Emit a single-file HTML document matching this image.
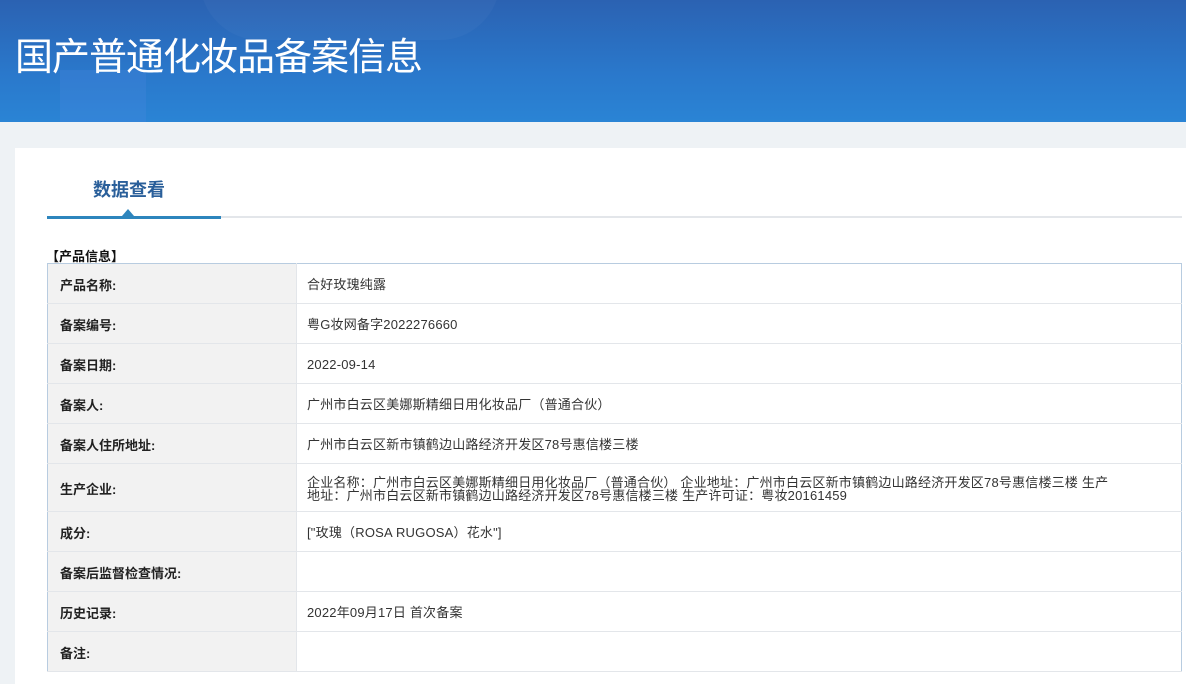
<!DOCTYPE html>
<html><head><meta charset="utf-8"><style>
*{margin:0;padding:0;box-sizing:border-box}
body{width:1186px;height:684px;overflow:hidden;background:#eef2f5;font-family:"Liberation Sans","Noto Sans CJK SC",sans-serif;position:relative}
.hd{position:absolute;left:0;top:0;width:1186px;height:122px;background:linear-gradient(180deg,#2b62b2 0%,#2a78cb 60%,#2a84d5 100%);overflow:hidden}
.hd .b1{position:absolute;left:60px;top:70px;width:86px;height:60px;background:rgba(90,140,230,.2)}
.hd .c1{position:absolute;left:200px;top:-80px;width:300px;height:120px;border-radius:60px;background:rgba(255,255,255,.03)}
.hd h1{position:absolute;left:15px;top:26px;font-size:38px;font-weight:normal;color:#fff;letter-spacing:-1px;font-family:"Noto Sans CJK SC",sans-serif}
.panel{position:absolute;left:15px;top:148px;width:1171px;height:536px;background:#fff}
.tab{position:absolute;left:93px;top:176px;font-size:18px;font-weight:bold;color:#2a5f9a;font-family:"Noto Sans CJK SC",sans-serif}
.ul{position:absolute;left:47px;top:216px;width:1135px;height:2px;background:#e3e6ea}
.ul2{position:absolute;left:47px;top:216px;width:174px;height:3px;background:#2d85bd}
.tri{position:absolute;left:122px;top:209px;width:0;height:0;border-left:6px solid transparent;border-right:6px solid transparent;border-bottom:7px solid #2d85bd}
.sec{position:absolute;left:46px;top:246px;font-size:13px;font-weight:bold;color:#111}
table{position:absolute;left:47px;top:263px;width:1135px;border-collapse:collapse;border:1px solid #b8cce0;font-size:13px;color:#333}
td{border-bottom:1px solid #e3e6ea;height:40px;vertical-align:middle;padding-top:2px}
td.l{width:249px;background:#f2f2f2;font-weight:bold;padding-left:12px;color:#222;border-right:1px solid #e3e6ea}
td.r{padding-left:10px;line-height:13px;letter-spacing:0.2px}
</style></head><body>
<div class="hd"><div class="c1"></div><div class="b1"></div><h1>国产普通化妆品备案信息</h1></div>
<div class="panel"></div>
<div class="tab">数据查看</div>
<div class="ul"></div><div class="ul2"></div><div class="tri"></div>
<div class="sec">【产品信息】</div>
<table>
<tr><td class="l">产品名称:</td><td class="r">合好玫瑰纯露</td></tr>
<tr><td class="l">备案编号:</td><td class="r">粤G妆网备字2022276660</td></tr>
<tr><td class="l">备案日期:</td><td class="r">2022-09-14</td></tr>
<tr><td class="l">备案人:</td><td class="r">广州市白云区美娜斯精细日用化妆品厂（普通合伙）</td></tr>
<tr><td class="l">备案人住所地址:</td><td class="r">广州市白云区新市镇鹤边山路经济开发区78号惠信楼三楼</td></tr>
<tr><td class="l" style="height:48px">生产企业:</td><td class="r">企业名称：广州市白云区美娜斯精细日用化妆品厂（普通合伙） 企业地址：广州市白云区新市镇鹤边山路经济开发区78号惠信楼三楼 生产<br>地址：广州市白云区新市镇鹤边山路经济开发区78号惠信楼三楼 生产许可证：粤妆20161459</td></tr>
<tr><td class="l">成分:</td><td class="r">["玫瑰（ROSA RUGOSA）花水"]</td></tr>
<tr><td class="l">备案后监督检查情况:</td><td class="r"></td></tr>
<tr><td class="l">历史记录:</td><td class="r">2022年09月17日 首次备案</td></tr>
<tr><td class="l">备注:</td><td class="r"></td></tr>
</table>
</body></html>
